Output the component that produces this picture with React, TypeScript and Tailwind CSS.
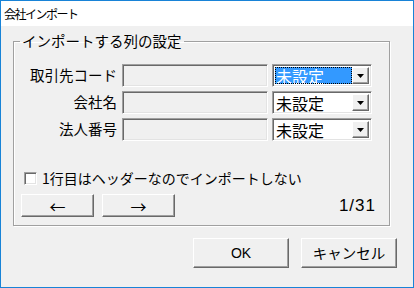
import React from "react";

const sunken =
  "border border-t-[#a0a0a0] border-l-[#a0a0a0] border-r-white border-b-white shadow-[inset_1px_1px_0_#696969,inset_-1px_-1px_0_#e3e3e3]";
const raised =
  "border border-t-white border-l-white border-r-[#696969] border-b-[#696969] shadow-[inset_-1px_-1px_0_#a0a0a0] bg-[#f0f0f0]";

function Arrow() {
  return (
    <svg width="7" height="4" viewBox="0 0 7 4">
      <path d="M0 0h7L3.5 4z" fill="#000" />
    </svg>
  );
}

function Combo({ selected }: { selected?: boolean }) {
  return (
    <div className={`${sunken} flex h-[23px] w-[100px] bg-white p-[2px]`}>
      {selected ? (
        <div className="flex flex-1 items-center bg-[#3399ff] pl-[1px] text-[16px] leading-none text-white outline-1 -outline-offset-1 outline-dotted outline-black">
          未設定
        </div>
      ) : (
        <div className="flex flex-1 items-center pl-[1px] text-[16px] leading-none text-black">
          未設定
        </div>
      )}
      <div className={`${raised} flex w-[17px] items-center justify-center`}>
        <Arrow />
      </div>
    </div>
  );
}

function Row({ label, selected }: { label: string; selected?: boolean }) {
  return (
    <div className="flex h-[23px] items-center">
      <div className="w-[104px] pr-[1px] text-right text-[14.5px] leading-none">{label}</div>
      <div className={`${sunken} ml-[4px] h-[23px] w-[146px] bg-[#f0f0f0]`} />
      <div className="ml-[4px]">
        <Combo selected={selected} />
      </div>
    </div>
  );
}

export default function App() {
  return (
    <div className="flex h-[288px] w-[414px] flex-col border border-[#1883d7] bg-[#f0f0f0] font-['Noto_Sans_CJK_JP',sans-serif] text-black">
      <div className="flex h-[25px] items-center bg-white pl-[3px] text-[12px] tracking-[-1.5px]">
        会社インポート
      </div>
      <div className="flex flex-1 flex-col">
        <fieldset className="ml-[12px] mt-[6px] h-[194px] w-[377px] border border-[#a0a0a0] shadow-[inset_1px_1px_0_#fff,1px_1px_0_#fff]">
          <legend className="ml-[6px] px-[2px] text-[14.5px] leading-[18px]">インポートする列の設定</legend>
          <div className="flex flex-col gap-[4px] pt-[14px]">
            <Row label="取引先コード" selected />
            <Row label="会社名" />
            <Row label="法人番号" />
          </div>
          <div className="mt-[28px] flex items-center pl-[10px]">
            <div className={`${sunken} h-[13px] w-[13px] bg-white`} />
            <span className="ml-[5px] text-[14px] leading-[18px]">1行目はヘッダーなのでインポートしない</span>
          </div>
          <div className="mt-[6px] flex items-center pl-[7px] pr-[13px]">
            <button className={`${raised} h-[23px] w-[73px] text-[16px] leading-none`}>←</button>
            <button className={`${raised} ml-[8px] h-[23px] w-[73px] text-[16px] leading-none`}>→</button>
            <span className="ml-auto font-['Liberation_Sans',sans-serif] text-[17px] tracking-[1px]">1/31</span>
          </div>
        </fieldset>
        <div className="mt-[12px] flex justify-end gap-[12px] pr-[16px]">
          <button className={`${raised} h-[30px] w-[96px] font-['Liberation_Sans',sans-serif] text-[14px]`}>OK</button>
          <button className={`${raised} h-[30px] w-[96px] text-[14.5px]`}>キャンセル</button>
        </div>
      </div>
    </div>
  );
}
